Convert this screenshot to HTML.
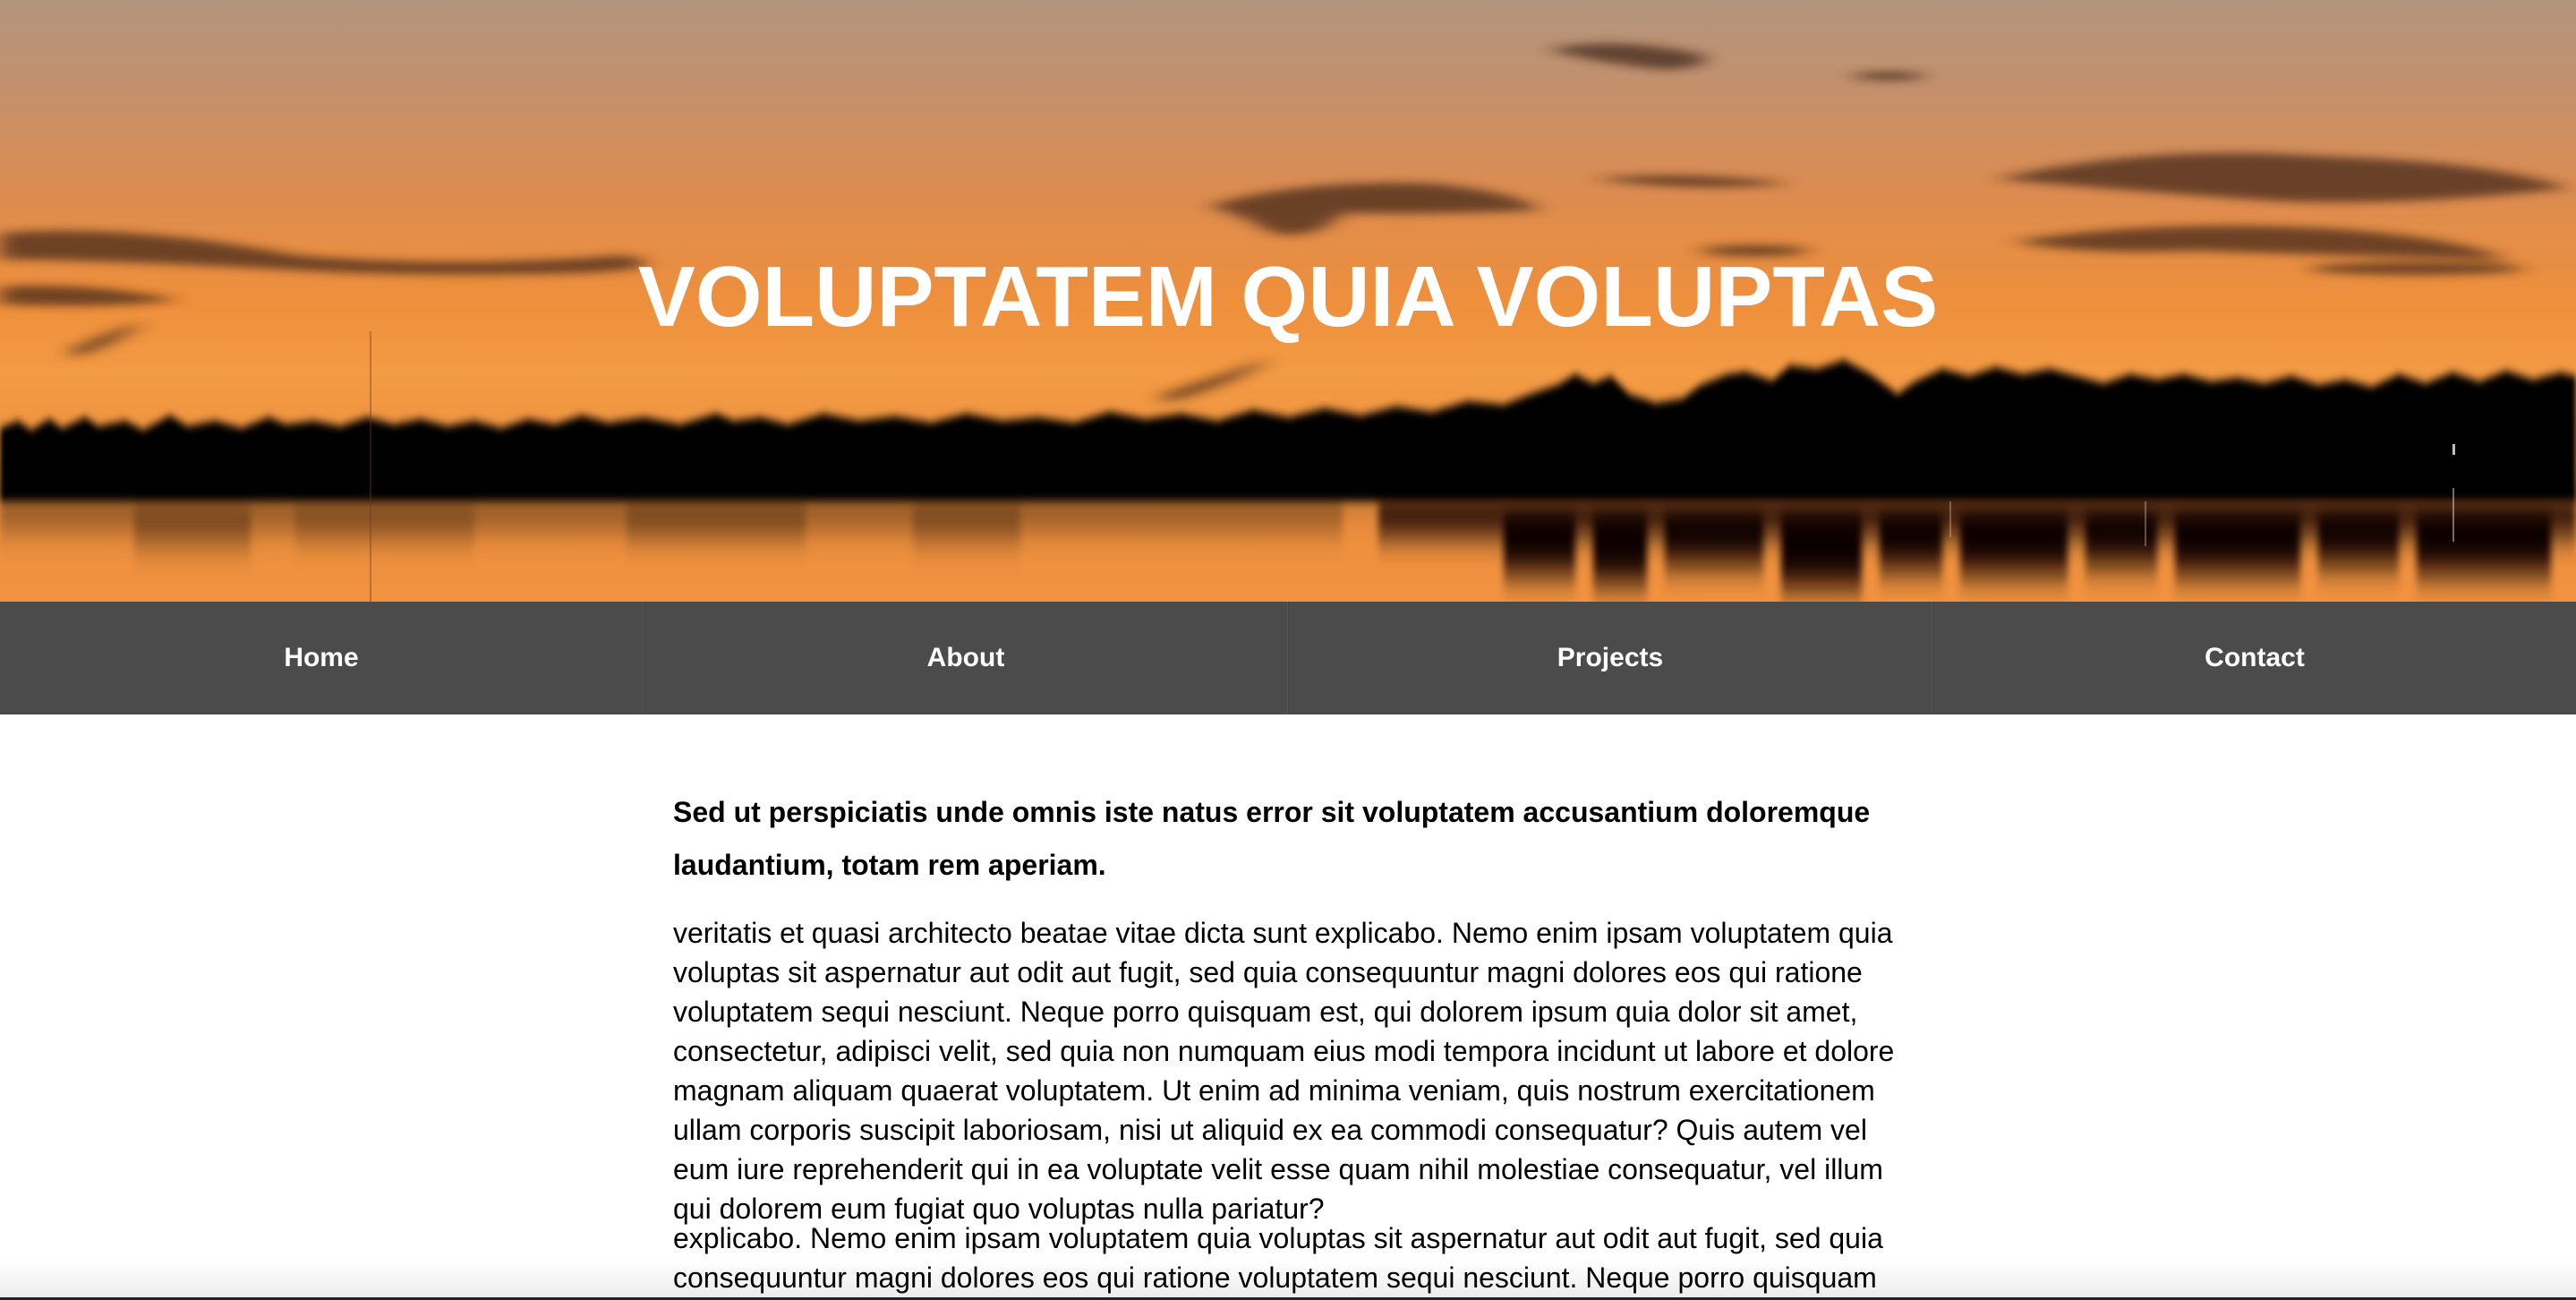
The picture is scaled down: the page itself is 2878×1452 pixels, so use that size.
<!DOCTYPE html>
<html><head><meta charset="utf-8">
<style>
html,body{margin:0;padding:0;background:#fff;overflow:hidden;width:2878px;height:1452px;}
#wrap{position:relative;width:2878px;height:1452px;overflow:hidden;font-family:"Liberation Sans",Arial,sans-serif;}
header{position:absolute;left:0;top:0;width:2878px;height:672px;overflow:hidden;
background:linear-gradient(180deg,#b3957d 0%,#c4906c 15%,#dc8c50 32%,#ee8f3c 50%,#f39a44 62%,#f09642 70%,#ee8f3e 85%,#f0923f 100%);}
header svg{position:absolute;left:0;top:0;}
h1{position:absolute;left:0;top:272px;width:2878px;margin:0;text-align:center;color:#fff;font-weight:bold;font-size:96px;line-height:120px;}
nav{position:absolute;left:0;top:672px;width:2878px;height:126px;background:#4b4b4b;display:flex;}
nav a{flex:1;color:#fff;text-decoration:none;font-weight:bold;font-size:30px;text-align:center;line-height:126px;border-left:1px solid #444;border-right:1px solid #555;box-sizing:border-box;}
nav a:first-child{border-left:none}
nav a:last-child{border-right:none}
main{position:absolute;left:752px;top:878px;width:1376px;}
h2{margin:0;font-size:32px;line-height:59px;font-weight:bold;color:#000;}
p{margin:0;font-size:32px;line-height:44px;color:#000;}
p.a{margin-top:24px}
p.b{margin-top:-11px}
.shade{position:absolute;left:0;top:1405px;width:2878px;height:47px;background:linear-gradient(180deg,rgba(0,0,0,0),rgba(0,0,0,0.08));}
.edge{position:absolute;left:0;top:1449px;width:2878px;height:3px;background:#222;}
</style></head><body>
<div id="wrap">
<header>
<svg width="2878" height="672" viewBox="0 0 2878 672">
<defs>
<filter id="b1" x="-20%" y="-50%" width="140%" height="200%"><feGaussianBlur stdDeviation="12 5"/></filter>
<filter id="b2" x="-5%" y="-20%" width="110%" height="140%"><feGaussianBlur stdDeviation="3 5"/></filter>
<filter id="b3" x="-5%" y="-50%" width="110%" height="200%"><feGaussianBlur stdDeviation="4 18"/></filter>
</defs>
<g filter="url(#b1)" fill="#3a2418" opacity="0.7">
<path d="M1730 55 Q1800 40 1900 60 Q1920 75 1860 78 Q1780 70 1730 55Z"/>
<ellipse cx="2110" cy="85" rx="40" ry="5"/>
<path d="M2230 200 Q2400 160 2600 175 Q2780 180 2870 210 Q2700 230 2550 225 Q2400 215 2230 200Z"/>
<path d="M2250 270 Q2400 245 2600 255 Q2750 265 2800 290 Q2600 285 2450 280 Q2330 285 2250 270Z"/>
<path d="M1350 230 Q1450 200 1600 205 Q1700 215 1720 235 Q1600 240 1500 238 Q1470 270 1420 260 Q1400 245 1350 230Z"/>
<path d="M1780 200 Q1880 190 2000 205 Q1900 215 1780 200Z"/>
<path d="M0 260 Q150 250 330 285 Q500 300 700 285 Q760 300 650 305 Q450 310 300 300 Q100 290 0 290Z"/>
<path d="M0 320 Q100 315 200 335 Q120 345 0 340Z"/>
<ellipse cx="2700" cy="300" rx="120" ry="7"/>
<ellipse cx="1960" cy="280" rx="60" ry="6"/>
<path d="M80 390 Q120 370 160 360 Q130 385 80 400Z"/>
<path d="M1300 440 Q1360 420 1420 400 Q1380 430 1300 450Z"/>
</g>
<g filter="url(#b2)" fill="#060302">
<path d="M0 560 L0 478 L20 470 L35 480 L55 468 L70 478 L95 466 L110 476 L140 470 L160 480 L190 464 L210 476 L240 470 L270 478 L300 466 L320 474 L350 470 L380 476 L410 466 L440 474 L470 468 L500 476 L530 470 L560 478 L590 468 L620 474 L650 464 L680 472 L720 466 L760 474 L800 462 L820 470 L850 466 L880 474 L920 462 L960 470 L1000 465 L1040 472 L1080 462 L1120 470 L1160 466 L1200 472 L1240 460 L1280 468 L1320 462 L1360 470 L1400 458 L1440 466 L1480 456 L1520 464 L1560 454 L1600 460 L1640 448 L1680 452 L1710 440 L1740 430 L1760 418 L1780 428 L1800 420 L1820 440 L1850 450 L1880 445 L1900 430 L1930 418 L1950 415 L1980 425 L2000 408 L2030 412 L2060 402 L2090 418 L2120 440 L2140 426 L2170 412 L2200 420 L2230 410 L2260 418 L2290 412 L2320 420 L2350 428 L2380 418 L2410 424 L2440 418 L2470 426 L2500 422 L2530 428 L2560 420 L2590 430 L2620 424 L2650 432 L2680 418 L2710 428 L2740 416 L2770 426 L2800 414 L2830 424 L2860 416 L2878 420 L2878 560 Z"/>
</g>
<g filter="url(#b3)" fill="#0a0402">
<rect x="0" y="554" width="2878" height="12" opacity="0.45"/>
<rect x="0" y="560" width="1500" height="30" opacity="0.4"/>
<rect x="150" y="570" width="130" height="40" opacity="0.35"/>
<rect x="330" y="570" width="200" height="30" opacity="0.3"/>
<rect x="700" y="565" width="200" height="35" opacity="0.35"/>
<rect x="1020" y="565" width="120" height="40" opacity="0.3"/>
<rect x="1540" y="556" width="1338" height="40"/>
<rect x="1680" y="560" width="80" height="80"/>
<rect x="1780" y="560" width="60" height="90"/>
<rect x="1860" y="560" width="110" height="70"/>
<rect x="1990" y="560" width="90" height="95"/>
<rect x="2100" y="560" width="70" height="75"/>
<rect x="2190" y="560" width="120" height="80"/>
<rect x="2330" y="560" width="80" height="70"/>
<rect x="2430" y="560" width="140" height="80"/>
<rect x="2590" y="560" width="90" height="70"/>
<rect x="2700" y="560" width="150" height="80"/>
</g>
<rect x="2178" y="560" width="2" height="40" fill="#cfd8b0" opacity="0.35"/>
<rect x="2396" y="560" width="2" height="50" fill="#e0e0c0" opacity="0.35"/>
<rect x="2740" y="545" width="2" height="60" fill="#e8eef8" opacity="0.45"/>
<rect x="2740" y="496" width="3" height="12" fill="#e8eef8" opacity="0.8"/>
<rect x="413" y="370" width="2" height="302" fill="#6a3a20" opacity="0.4"/>
</svg>
<h1>VOLUPTATEM QUIA VOLUPTAS</h1>
</header>
<nav><a>Home</a><a>About</a><a>Projects</a><a>Contact</a></nav>
<main>
<h2>Sed ut perspiciatis unde omnis iste natus error sit voluptatem accusantium doloremque laudantium, totam rem aperiam.</h2>
<p class="a">veritatis et quasi architecto beatae vitae dicta sunt explicabo. Nemo enim ipsam voluptatem quia voluptas sit aspernatur aut odit aut fugit, sed quia consequuntur magni dolores eos qui ratione voluptatem sequi nesciunt. Neque porro quisquam est, qui dolorem ipsum quia dolor sit amet, consectetur, adipisci velit, sed quia non numquam eius modi tempora incidunt ut labore et dolore magnam aliquam quaerat voluptatem. Ut enim ad minima veniam, quis nostrum exercitationem ullam corporis suscipit laboriosam, nisi ut aliquid ex ea commodi consequatur? Quis autem vel eum iure reprehenderit qui in ea voluptate velit esse quam nihil molestiae consequatur, vel illum qui dolorem eum fugiat quo voluptas nulla pariatur?</p>
<p class="b">explicabo. Nemo enim ipsam voluptatem quia voluptas sit aspernatur aut odit aut fugit, sed quia consequuntur magni dolores eos qui ratione voluptatem sequi nesciunt. Neque porro quisquam est, qui dolorem ipsum quia dolor sit amet.</p>
</main>
<div class="shade"></div>
<div class="edge"></div>
</div>
</body></html>
